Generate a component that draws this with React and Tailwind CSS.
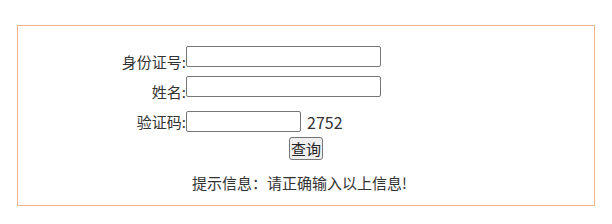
export default function App() {
    return (
        <div className="w-[612px] h-[224px] bg-white pt-[25px] pl-[17px] font-['Noto_Sans_CJK_SC','Noto_Sans',sans-serif] text-[15px] text-[#333]">
            <div className="w-[578px] h-[181px] border border-[#f2b593] pt-[20px]">
                <div className="flex h-[30px]">
                    <span className="w-[168px] text-right mt-[6px] leading-[20px]">身份证号:</span>
                    <input type="text" className="w-[195px] h-[21px] border border-[#767676] rounded-[2px] bg-white outline-none" />
                </div>
                <div className="flex h-[35px]">
                    <span className="w-[168px] text-right mt-[6px] leading-[20px]">姓名:</span>
                    <input type="text" className="w-[195px] h-[21px] border border-[#767676] rounded-[2px] bg-white outline-none" />
                </div>
                <div className="flex items-center h-[21px]">
                    <span className="w-[168px] text-right leading-[20px]">验证码:</span>
                    <input type="text" className="w-[115px] h-[21px] border border-[#767676] rounded-[2px] bg-white outline-none" />
                    <span className="ml-[6px] leading-[20px] text-[16px]">2752</span>
                </div>
                <div className="flex justify-center mt-[5px]">
                    <button className="h-[23px] px-[1px] border border-[#767676] rounded-[3px] bg-[#efefef] leading-[19px] text-[15px] text-[#222]">
                        查询
                    </button>
                </div>
                <p className="mt-[13px] leading-[20px] text-center pr-[13px]">提示信息：请正确输入以上信息!</p>
            </div>
        </div>
    );
}
